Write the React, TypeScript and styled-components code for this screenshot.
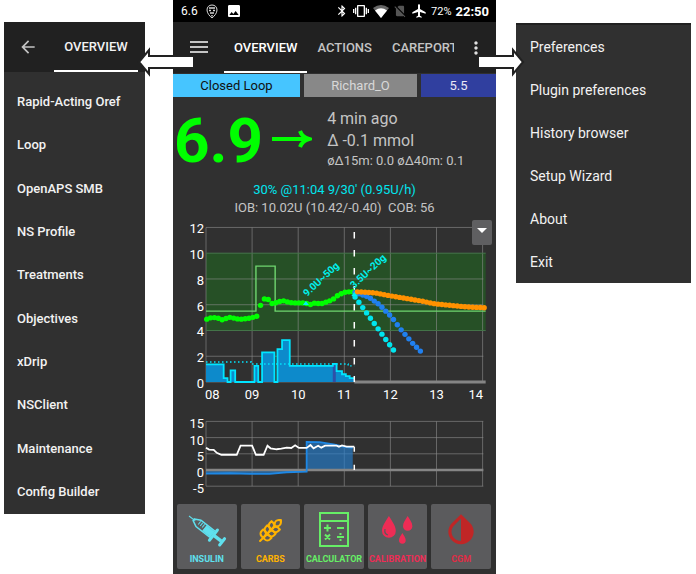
import React from "react";
import styled, { createGlobalStyle } from "styled-components";
import {
  MdAirplanemodeActive,
  MdArrowBack,
  MdBluetooth,
  MdImage,
  MdInvertColors,
  MdMoreVert,
  MdNoSim,
  MdVibration,
} from "react-icons/md";
import { Wheat } from "lucide-react";

const colors = {
  panel: "#303030",
  bar: "#212121",
  text: "#f2f2f2",
  muted: "#c4c4c4",
  cyan: "#00e5ee",
  green: "#00ff00",
  blue: "#1e88e5",
};

const GlobalStyle = createGlobalStyle`
  * { box-sizing: border-box; }
  body { margin: 0; background: #fff; font-family: Roboto, "Noto Sans", sans-serif; }
  button { font: inherit; color: inherit; border: 0; padding: 0; margin: 0; background: none; cursor: pointer; }
`;

const Page = styled.div`
  display: grid;
  grid-template-columns: minmax(0, 141fr) 28px minmax(0, 323fr) 20px minmax(0, 175fr);
  align-items: start;
  padding: 0 5px 0 4px;
`;

/* ---------- side panels ---------- */

const Drawer = styled.nav`
  grid-column: 1;
  margin-top: 22px;
  background: ${colors.panel};
`;

const DrawerHeader = styled.div`
  display: flex;
  align-items: stretch;
  height: 50px;
  padding: 0 7px 0 14px;
  background: ${colors.bar};
`;

const IconButton = styled.button<{ $tone?: string }>`
  display: flex;
  align-items: center;
  color: ${(p) => p.$tone ?? colors.muted};
`;

const DrawerTitle = styled.span`
  display: flex;
  align-items: center;
  justify-content: center;
  width: 84px;
  margin-left: auto;
  border-bottom: 2px solid #fff;
  color: ${colors.text};
  font-size: 13px;
  font-weight: 500;
`;

const DrawerList = styled.ul`
  display: grid;
  grid-auto-rows: 1fr;
  height: 442px;
  margin: 0;
  padding: 8px 0 1px;
  list-style: none;
`;

const DrawerItem = styled.button`
  width: 100%;
  height: 100%;
  padding-left: 13px;
  color: ${colors.text};
  font-size: 13px;
  font-weight: 500;
  text-align: left;
`;

const Menu = styled.ul`
  grid-column: 5;
  margin: 23px 0 0;
  padding: 0;
  border-top: 2px solid ${colors.bar};
  background: ${colors.panel};
  list-style: none;
`;

const MenuItem = styled.button`
  display: block;
  width: 100%;
  height: 43px;
  padding-left: 14px;
  color: ${colors.text};
  font-size: 14px;
  text-align: left;
`;

/* ---------- phone ---------- */

const Phone = styled.main`
  grid-column: 3;
  position: relative;
  background: ${colors.panel};
`;

const StatusBar = styled.div`
  display: flex;
  align-items: center;
  gap: 8px;
  height: 22px;
  padding: 0 7px 0 8px;
  background: #000;
  color: #fff;
  font-size: 12px;
`;

const StatusGroup = styled.div`
  display: flex;
  align-items: center;
  gap: 4px;
  margin-left: auto;
`;

const Battery = styled.span`
  font-size: 11px;
`;

const Clock = styled.span`
  font-size: 13px;
  font-weight: 700;
`;

const AppBar = styled.header`
  display: flex;
  align-items: stretch;
  height: 51px;
  padding: 0 10px 0 17px;
  background: ${colors.bar};
`;

const Tabs = styled.div`
  display: flex;
  flex: 1;
  min-width: 0;
  margin: 0 12px 0 16px;
  overflow: hidden;
`;

const Tab = styled.button<{ $active?: boolean }>`
  flex: none;
  padding: 0 10px;
  border-bottom: 2px solid ${(p) => (p.$active ? "#fff" : "transparent")};
  border-top: 2px solid transparent;
  color: ${(p) => (p.$active ? "#fff" : colors.muted)};
  font-size: 13px;
  font-weight: 500;
`;

const Chips = styled.div`
  display: grid;
  grid-template-columns: 127fr 113fr 75fr;
  gap: 4px;
  margin-top: 1px;
`;

const Chip = styled.button<{ $bg: string; $fg: string }>`
  height: 23px;
  background: ${(p) => p.$bg};
  color: ${(p) => p.$fg};
  font-size: 13px;
`;

const Reading = styled.section`
  display: flex;
  align-items: center;
  height: 84px;
  padding: 4px 0 0 1px;
`;

const Glucose = styled.strong`
  color: ${colors.green};
  font-size: 62px;
  line-height: 62px;
  font-weight: 700;
`;

const TrendArrow = styled.svg`
  flex: none;
  margin: 0 15px 4px 9px;
`;

const Deltas = styled.div`
  display: flex;
  flex-direction: column;
  padding-bottom: 5px;
  color: ${colors.muted};
  font-size: 16px;
  line-height: 22px;
`;

const SmallDelta = styled.span`
  font-size: 13px;
  line-height: 18px;
`;

const Summary = styled.section`
  display: flex;
  flex-direction: column;
  align-items: center;
  font-size: 13px;
  line-height: 18px;
  color: ${colors.muted};
  white-space: pre;
`;

const TempBasal = styled.span`
  color: ${colors.cyan};
`;

const ChartBox = styled.div`
  position: relative;
  margin-top: 3px;
`;

const Chart = styled.svg`
  display: block;
  width: 100%;
  height: auto;
  font-family: Roboto, sans-serif;
`;

const ScaleButton = styled.button`
  position: absolute;
  top: 0;
  right: 4px;
  display: flex;
  align-items: center;
  justify-content: center;
  width: 20px;
  height: 25px;
  padding-bottom: 4px;
  border-radius: 2px;
  background: #5f5f61;
`;

const Actions = styled.div`
  display: grid;
  grid-template-columns: repeat(5, minmax(0, 1fr));
  gap: 4px;
  padding: 7px 5px 6px 4px;
`;

const Action = styled.button<{ $tone: string }>`
  display: flex;
  flex-direction: column;
  align-items: center;
  justify-content: flex-end;
  height: 65px;
  padding-bottom: 3px;
  border-radius: 2px;
  background: #5b5b5d;
  color: ${(p) => p.$tone};
  font-size: 9px;
  line-height: 14px;
  font-weight: 700;
`;

const ActionIcon = styled.span`
  display: flex;
  align-items: center;
  justify-content: center;
  height: 44px;
`;

const Pointer = styled.svg<{ $side: "left" | "right" }>`
  position: absolute;
  z-index: 1;
  top: 47px;
  ${(p) => (p.$side === "left" ? "left: -36px;" : "right: -29px;")}
`;

/* ---------- chart data: minutes after 08:00, value ---------- */

type Point = [number, number];

const HOURS = ["08", "09", "10", "11", "12", "13", "14"];
const NOW = 193;
const END = 364;
const px = (minutes: number) => 33 + (minutes * 46.1) / 60;
const gy = (v: number) => 162 - v * 12.88;
const iy = (v: number) => 62 - v * 3.24;

const line = (points: Point[], y: (v: number) => number) =>
  points.map(([m, v], i) => `${i ? "L" : "M"}${px(m)} ${y(v)}`).join("");

const steps = (points: Point[]) =>
  points
    .map(([m, v], i) => (i ? `H${px(m)}V${gy(v)}` : `M${px(m)} ${gy(v)}`))
    .join("");

const glucose = [
  4.88, 4.98, 5, 4.95, 4.83, 4.93, 5.02, 4.96, 4.9, 4.88, 4.91, 4.95, 5.02, 5.1,
  5.95, 6.45, 6.4, 6.1, 6.15, 6.25, 6.3, 6.22, 6.16, 6.14, 6.14, 6.14, 6.1, 6.02,
  6.12, 6.1, 6.1, 6.2, 6.3, 6.45, 6.7, 6.85, 6.97, 7, 7,
].map((v, i): Point => [1 + i * 5, v]);

const cobAnchors: Point[] = [
  [197, 7], [220, 6.92], [240, 6.69], [259, 6.5], [279, 6.3],
  [298, 6.07], [318, 5.95], [337, 5.84], [363, 5.76],
];
const cobPrediction = Array.from({ length: 34 }, (_, i): Point => {
  const m = 197 + i * 5;
  const k = Math.max(1, cobAnchors.findIndex((a) => a[0] >= m));
  const [m0, v0] = cobAnchors[k - 1];
  const [m1, v1] = cobAnchors[k];
  return [m, v0 + ((v1 - v0) * (m - m0)) / (m1 - m0)];
});
const zeroPrediction = Array.from({ length: 11 }, (_, i): Point => [194 + i * 5, 6.6 - i * 0.412]);
const iobPrediction = [
  6.95, 6.85, 6.75, 6.65, 6.5, 6.28, 6.07, 5.8, 5.5, 5.2, 4.85, 4.45, 4.05, 3.7, 3.35, 3, 2.7, 2.4,
].map((v, i): Point => [194 + i * 5, v]);

const basal: Point[] = [
  [0, 1.37], [23, 0.3], [28, 0], [32, 0.9], [38, 0], [63, 1.25], [68, 0], [73, 2.3],
  [89, 0], [93, 2.55], [99, 3.25], [109, 1.25], [165, 1.4], [170, 0.85], [177, 0.6],
  [182, 0.45], [187, 0.3], [193, 0.3],
];
const profileBasal: Point[] = [[0, 1.55], [59, 1.4], [185, 1.25], [193, 1.25]];
const target: Point[] = [[0, 5.5], [65, 9], [90, 5.5], [END, 5.5]];
const sensitivity: Point[] = [
  [0, 6.9], [4, 6.3], [10, 6.2], [14, 5.3], [20, 4.7], [40, 4.7], [45, 7.5], [60, 7.5],
  [65, 4.7], [75, 4.7], [80, 7.5], [84, 6.7], [92, 6.4], [98, 6.6], [105, 6.9], [111, 6.8],
  [116, 7.6], [121, 6.8], [131, 6.8], [136, 7.7], [140, 6.7], [146, 7.5], [150, 6.9],
  [155, 7.5], [170, 7.5], [173, 7.2], [177, 7.6], [183, 7.2], [193, 7.2],
];
const iob: Point[] = [
  [0, -1.1], [31, -1], [57, -1.2], [83, -1.2], [105, -0.7], [131, -0.5], [131, 8.7],
  [148, 8.6], [166, 7.9], [179, 7.2], [191, 6.8],
];

function Dots({ points, fill }: { points: Point[]; fill: string }) {
  return (
    <g fill={fill}>
      {points.map(([m, v]) => (
        <circle key={m} cx={px(m)} cy={gy(v)} r="2.7" />
      ))}
    </g>
  );
}

function GlucoseChart() {
  return (
    <Chart viewBox="0 0 323 188" role="img" aria-label="Glucose and basal history">
      <rect x={px(0)} y={gy(10)} width={px(END) - px(0)} height={gy(4) - gy(10)} fill="#265026" />
      <g stroke="#8c8c8c" strokeOpacity=".6">
        {HOURS.map((h, i) => (
          <path key={h} d={`M${px(i * 60)} ${gy(12)}V${gy(0)}`} />
        ))}
        {[12, 8, 6, 2, 0].map((v) => (
          <path key={v} d={`M${px(0)} ${gy(v)}H${px(361)}`} />
        ))}
      </g>
      <path d={`M${px(0)} ${gy(10)}H${px(END)}M${px(0)} ${gy(4)}H${px(END)}`} stroke="#44764a" />
      <path d={`M${px(NOW)} ${gy(0)}H${px(END)}`} stroke="#858585" strokeWidth="3" />
      <g fill="#fff" fontSize="13">
        {[12, 10, 8, 6, 4, 2, 0].map((v) => (
          <text key={v} x="31" y={gy(v) + 6} textAnchor="end">{v}</text>
        ))}
        {HOURS.map((h, i) => (
          <text
            key={h}
            x={i === 0 ? 32 : i === 6 ? 310 : px(i * 60)}
            y="179"
            textAnchor={i === 0 ? "start" : i === 6 ? "end" : "middle"}
          >
            {h}
          </text>
        ))}
      </g>
      <path d={`${steps(basal)}V${gy(0)}H${px(0)}Z`} fill="#0d8acb" />
      <rect x={px(165)} y={gy(1.3)} width="3" height={gy(0) - gy(1.3)} fill="#2f4fa8" />
      <path d={steps(basal)} fill="none" stroke="#00e5ff" strokeWidth="1.8" />
      <path d={steps(profileBasal)} fill="none" stroke="#00e5ff" strokeWidth="1.4" strokeDasharray="1.5 2.5" />
      <path d={steps(target)} fill="none" stroke="#6fd56f" strokeWidth="1.4" />
      <path d={`M${px(NOW)} 12V162`} stroke="#fff" strokeWidth="1.5" strokeDasharray="6.5 11.5" />
      <Dots points={glucose} fill={colors.green} />
      <Dots points={iobPrediction} fill="#2080f0" />
      <Dots points={cobPrediction} fill="#ff9100" />
      <Dots points={zeroPrediction} fill={colors.cyan} />
      <g fill="#00f0f0">
        <path d={`M${px(130)} 81l3 4h-6ZM${px(NOW)} 72l3 4h-6Z`} />
        <g fontSize="10" fontWeight="700">
          <text transform="translate(134 77) rotate(-43)">9.0U~50g</text>
          <text transform="translate(181 69) rotate(-43)">3.5U~20g</text>
        </g>
      </g>
    </Chart>
  );
}

function InsulinChart() {
  return (
    <Chart viewBox="0 0 323 89" role="img" aria-label="Insulin on board and sensitivity">
      <g stroke="#8c8c8c" strokeOpacity=".6">
        {HOURS.map((h, i) => (
          <path key={h} d={`M${px(i * 60)} ${iy(15)}V${iy(-5)}`} />
        ))}
        {[15, 10, 5, -5].map((v) => (
          <path key={v} d={`M${px(0)} ${iy(v)}H${px(361)}`} />
        ))}
      </g>
      <path d={`${line(iob, iy)}V${iy(0)}H${px(0)}Z`} fill="#2680d0" fillOpacity=".65" />
      <path d={`M${px(0)} ${iy(0)}H${px(361)}`} stroke="#858585" strokeWidth="2.5" />
      <path d={line(iob, iy)} fill="none" stroke={colors.blue} strokeWidth="1.8" />
      <path d={line(sensitivity, iy)} fill="none" stroke="#fff" strokeWidth="1.8" />
      <path d={`M${px(NOW)} ${iy(7.2)}V${iy(5.6)}M${px(NOW)} ${iy(1.6)}V${iy(0)}`} stroke="#fff" strokeWidth="1.5" />
      <g fill="#fff" fontSize="13">
        {[15, 10, 5, 0, -5].map((v) => (
          <text key={v} x="31" y={iy(v) + 7} textAnchor="end">{v}</text>
        ))}
      </g>
    </Chart>
  );
}

/* ---------- icons ---------- */

const SyringeIcon = () => (
  <svg width="40" height="36" viewBox="0 0 40 36" fill="none" stroke="currentColor">
    <g transform="translate(2 4) rotate(38)">
      <path d="M0 0H8" strokeWidth="1" />
      <path d="M6 -1L12 -4H29V4H12L6 1Z" strokeWidth="1.5" />
      <path d="M20 -3H29V3H20Z" fill="currentColor" />
      <path d="M12.500 -3V1M15 -3V1M17.500 -3V1" strokeWidth="1" />
      <path d="M31 -6.500V6.500" strokeWidth="3" strokeLinecap="round" />
      <path d="M31 0H41" strokeWidth="3.500" />
      <path d="M42 -4V4" strokeWidth="3" strokeLinecap="round" />
    </g>
  </svg>
);

const CalculatorIcon = () => (
  <svg width="32" height="36" viewBox="0 0 32 36" fill="none" stroke="currentColor" strokeWidth="2">
    <rect x="2" y="1" width="28" height="33" />
    <path d="M2 9H30" />
    <path d="M6 16H13M9.500 12.500V19.500M19 16H26M19 25H26M22.500 21V23M22.500 27V29M7 22.500L12 27.500M12 22.500L7 27.500" />
  </svg>
);

const drop = "M6 0C9 5 12 8.500 12 13A6 6 0 0 1 0 13C0 8.500 3 5 6 0Z";

const DropsIcon = () => (
  <svg width="33" height="30" viewBox="0 0 33 30" fill="currentColor">
    <path transform="translate(1 1) scale(1.15)" d={drop} />
    <path transform="translate(22 1) scale(.78)" d={drop} />
    <path transform="translate(18 18) scale(.56)" d={drop} />
    <path d="M4 14Q3 19 7 20" fill="none" stroke="#5b5b5d" strokeWidth="1.2" />
  </svg>
);

const MascotIcon = () => (
  <svg width="12" height="15" viewBox="0 0 12 15" fill="none" stroke="#d8d8d8">
    <path d="M6 1C9 1 11 3 11 6C11 9 8.500 12 6 14C3.500 12 1 9 1 6C1 3 3 1 6 1Z" />
    <path d="M3 4H9M3 6.500H5M7 6.500H9M4 9H8M6 11V12.500" strokeWidth="1.4" />
  </svg>
);

const WifiIcon = () => (
  <svg width="16" height="13" viewBox="0 0 16 13">
    <path d="M8 13L0 3Q8 -3 16 3Z" fill="#666" />
    <path d="M8 13L2 5.500Q8 1 14 5.500Z" fill="#fff" />
  </svg>
);

const MenuIcon = () => (
  <svg width="18" height="14" viewBox="0 0 18 14" stroke="currentColor" strokeWidth="2">
    <path d="M0 1H18M0 6H18M0 11H18" />
  </svg>
);

const drawerItems = [
  "Rapid-Acting Oref", "Loop", "OpenAPS SMB", "NS Profile", "Treatments",
  "Objectives", "xDrip", "NSClient", "Maintenance", "Config Builder",
];
const menuItems = [
  "Preferences", "Plugin preferences", "History browser", "Setup Wizard", "About", "Exit",
];
const actions = [
  { label: "INSULIN", tone: "#5fe0ee", icon: <SyringeIcon /> },
  { label: "CARBS", tone: "#ffb300", icon: <Wheat size={25} strokeWidth={2} /> },
  { label: "CALCULATOR", tone: "#66ee66", icon: <CalculatorIcon /> },
  { label: "CALIBRATION", tone: "#ee2c55", icon: <DropsIcon /> },
  { label: "CGM", tone: "#e02c45", icon: <MdInvertColors size={38} color="#c02626" /> },
];

export default function App() {
  return (
    <>
      <GlobalStyle />
      <Page>
        <Drawer aria-label="Plugins">
          <DrawerHeader>
            <IconButton aria-label="Back"><MdArrowBack size={20} /></IconButton>
            <DrawerTitle>OVERVIEW</DrawerTitle>
          </DrawerHeader>
          <DrawerList>
            {drawerItems.map((item) => (
              <li key={item}><DrawerItem>{item}</DrawerItem></li>
            ))}
          </DrawerList>
        </Drawer>

        <Phone>
          <StatusBar>
            <span>6.6</span>
            <MascotIcon />
            <MdImage size={16} />
            <StatusGroup>
              <MdBluetooth size={14} />
              <MdVibration size={16} />
              <WifiIcon />
              <MdNoSim size={14} color="#555" />
              <MdAirplanemodeActive size={16} />
              <Battery>72%</Battery>
              <Clock>22:50</Clock>
            </StatusGroup>
          </StatusBar>
          <AppBar>
            <IconButton aria-label="Open navigation"><MenuIcon /></IconButton>
            <Tabs>
              <Tab $active>OVERVIEW</Tab>
              <Tab>ACTIONS</Tab>
              <Tab>CAREPORT</Tab>
            </Tabs>
            <IconButton aria-label="More options" $tone="#e0e0e0"><MdMoreVert size={20} /></IconButton>
          </AppBar>
          <Chips>
            <Chip $bg="#46c5ff" $fg="#111">Closed Loop</Chip>
            <Chip $bg="#888888" $fg="#d8d8d8">Richard_O</Chip>
            <Chip $bg="#303f9f" $fg="#e8e8f4">5.5</Chip>
          </Chips>
          <Reading>
            <Glucose>6.9</Glucose>
            <TrendArrow width="40" height="20" viewBox="0 0 40 20" fill="none" stroke={colors.green} strokeWidth="4">
              <path d="M0 10H37M28 2Q30 8 37 10Q30 12 28 18" />
            </TrendArrow>
            <Deltas>
              <span>4 min ago</span>
              <span>Δ -0.1 mmol</span>
              <SmallDelta>øΔ15m: 0.0 øΔ40m: 0.1</SmallDelta>
            </Deltas>
          </Reading>
          <Summary>
            <TempBasal>30% @11:04 9/30' (0.95U/h)</TempBasal>
            <span>IOB: 10.02U (10.42/-0.40)  COB: 56</span>
          </Summary>
          <ChartBox>
            <GlucoseChart />
            <ScaleButton aria-label="Chart options">
              <svg width="10" height="5" viewBox="0 0 10 5" fill="#fff"><path d="M0 0H10L5 5Z" /></svg>
            </ScaleButton>
          </ChartBox>
          <InsulinChart />
          <Actions>
            {actions.map(({ label, tone, icon }) => (
              <Action key={label} $tone={tone}>
                <ActionIcon>{icon}</ActionIcon>
                {label}
              </Action>
            ))}
          </Actions>
          <Pointer $side="left" width="58" height="30" viewBox="0 0 58 30" aria-hidden="true">
            <path d="M2 15L12 3V9H57V21H12V27Z" fill="#fff" stroke="#222" strokeWidth="2" />
          </Pointer>
          <Pointer $side="right" width="48" height="30" viewBox="0 0 48 30" aria-hidden="true">
            <path d="M46 15L36 3V9H1V21H36V27Z" fill="#fff" stroke="#222" strokeWidth="2" />
          </Pointer>
        </Phone>

        <Menu>
          {menuItems.map((item) => (
            <li key={item}><MenuItem>{item}</MenuItem></li>
          ))}
        </Menu>
      </Page>
    </>
  );
}
